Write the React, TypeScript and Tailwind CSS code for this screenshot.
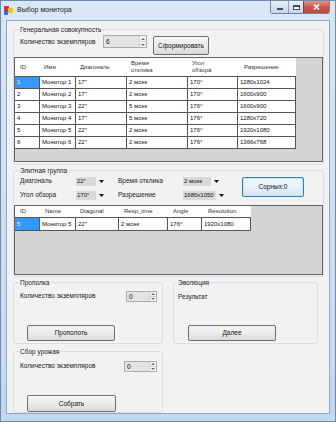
import type { ReactNode } from 'react'

type Col = { h: ReactNode; w: string; pad?: string }

const bigCols: Col[] = [
  { h: 'ID', w: 'w-[25px]', pad: 'pl-[5px]' },
  { h: 'Имя', w: 'w-[36px]' },
  { h: 'Диагональ', w: 'w-[51px]' },
  { h: <>Время<br />отклика</>, w: 'w-[61px]' },
  { h: <>Угол<br />обзора</>, w: 'w-[50px]' },
  { h: 'Разрешение', w: 'w-[58px]', pad: 'pl-[6px]' },
]

const bigRows = [
  ['1', 'Монитор 1', '17"', '2 мсек', '170°', '1280x1024'],
  ['2', 'Монитор 2', '17"', '2 мсек', '170°', '1600x900'],
  ['3', 'Монитор 3', '22"', '5 мсек', '176°', '1600x900'],
  ['4', 'Монитор 4', '17"', '5 мсек', '176°', '1280x720'],
  ['5', 'Монитор 5', '22"', '2 мсек', '176°', '1920x1080'],
  ['6', 'Монитор 6', '22"', '2 мсек', '176°', '1366x768'],
]

const eliteCols: Col[] = [
  { h: 'ID', w: 'w-[25px]', pad: 'pl-[5px]' },
  { h: 'Name', w: 'w-[36px]', pad: 'pl-[5px]' },
  { h: 'Diagonal', w: 'w-[43px]' },
  { h: 'Resp_time', w: 'w-[49px]', pad: 'pl-[5px]' },
  { h: 'Angle', w: 'w-[34px]', pad: 'pl-[5px]' },
  { h: 'Resolution', w: 'w-[49px]', pad: 'pl-[6px]' },
]

const eliteRows = [['5', 'Монитор 5', '22"', '2 мсек', '176°', '1920x1080']]

function Grid({ cols, rows, head, row, box }: { cols: Col[]; rows: string[][]; head: string; row: string; box: string }) {
  return (
    <div className={`w-[309px] overflow-hidden border border-[#646464] bg-[#d4d4d4] ${box}`}>
      <div className="flex">
        {cols.map((c, i) => (
          <div key={i} className={`${c.w} ${head} flex items-center border-b border-[#555] bg-white ${c.pad ?? 'pl-[4px]'} text-[6px] leading-[7px] text-[#333]`}>
            <span>{c.h}</span>
          </div>
        ))}
      </div>
      {rows.map((r, ri) => (
        <div key={ri} className="flex">
          {r.map((v, ci) => (
            <div
              key={ci}
              className={`${cols[ci].w} ${row} flex items-center border-r border-b border-[#555] pl-[2px] text-[6px] ${
                ri === 0 && ci === 0 ? 'bg-[#3399ff] text-white' : 'bg-white text-[#111]'
              }`}
            >
              {v}
            </div>
          ))}
        </div>
      ))}
    </div>
  )
}

function Group({ title, cls, lg = 'ml-[5px]', children }: { title: string; cls: string; lg?: string; children: ReactNode }) {
  return (
    <fieldset className={`rounded-[3px] border border-[#d5dfe5] ${cls}`}>
      <legend className={`${lg} px-[1px] text-[6.5px] leading-[9px] text-[#1a1a1a]`}>{title}</legend>
      {children}
    </fieldset>
  )
}

function Spin({ v, w, h }: { v: string; w: string; h: string }) {
  return (
    <div className={`flex ${w} ${h} border border-[#abadb3] bg-white`}>
      <div className="flex flex-1 items-center bg-[#e3e3e3] pl-[2px] text-[6.5px] text-[#111]">{v}</div>
      <div className="flex w-[7px] flex-col border-l border-[#d0d0d0] bg-[#f5f5f5]">
        <div className="flex flex-1 items-center justify-center border-b border-[#d0d0d0]">
          <svg width="4" height="2"><path d="M0 2L2 0L4 2Z" fill="#6a6a6a" /></svg>
        </div>
        <div className="flex flex-1 items-center justify-center">
          <svg width="4" height="2"><path d="M0 0L2 2L4 0Z" fill="#6a6a6a" /></svg>
        </div>
      </div>
    </div>
  )
}

function Combo({ v, w, box }: { v: string; w: string; box: string }) {
  return (
    <div className={`flex h-[10px] items-center ${box}`}>
      <span className={`${w} h-[9px] bg-[#d9d9d9] pl-[1px] text-[6px] leading-[9px] text-[#111]`}>{v}</span>
      <svg className="ml-[3px]" width="5" height="3"><path d="M0 0H5L2.5 3Z" fill="#111" /></svg>
    </div>
  )
}

function Btn({ children, cls }: { children: ReactNode; cls: string }) {
  return (
    <div className={`flex items-center justify-center rounded-[2px] border border-[#707070] bg-linear-to-b from-[#f5f5f5] via-[#ececec] to-[#d9d9d9] text-[6.5px] text-[#111] ${cls}`}>
      {children}
    </div>
  )
}

export default function App() {
  return (
    <div className="flex h-[422px] w-[336px] flex-col overflow-hidden border border-[#6f8cb0] bg-linear-to-b from-[#d9e7f6] to-[#c3d7ee] font-['Liberation_Sans',Arial,sans-serif]">
      {/* title bar */}
      <div className="flex h-[19px] shrink-0 items-start">
        <svg className="ml-[3px] mt-[4px]" width="9" height="10" viewBox="0 0 9 10">
          <rect x="0" y="1" width="5" height="5" fill="#d8322b" />
          <rect x="4" y="3" width="5" height="5" fill="#f3c316" />
          <rect x="0" y="6" width="4" height="4" fill="#3a6fd0" />
        </svg>
        <span className="ml-[4px] mt-[4px] text-[7px] leading-[9px] text-[#1e1e1e]">Выбор монитора</span>
        <div className="ml-auto mr-[5px] flex h-[13px] overflow-hidden rounded-b-[3px] border border-t-0 border-[#6d86a8]">
          <div className="flex w-[17px] items-end justify-center bg-linear-to-b from-[#e9f1fa] to-[#c4d6ec] pb-[3px]">
            <div className="h-[2px] w-[6px] border border-[#3d4c60] bg-white" />
          </div>
          <div className="flex w-[15px] items-center justify-center border-l border-[#8aa0bd] bg-linear-to-b from-[#e9f1fa] to-[#c4d6ec]">
            <div className="h-[5px] w-[7px] border border-t-2 border-[#3d4c60] bg-white" />
          </div>
          <div className="flex w-[26px] items-center justify-center border-l border-[#8a3a33] bg-linear-to-b from-[#e0948a] via-[#d0574c] to-[#c3463a]">
            <svg width="7" height="6" viewBox="0 0 7 6">
              <path d="M1 0.5L6 5.5M6 0.5L1 5.5" stroke="#fff" strokeWidth="1.6" />
            </svg>
          </div>
        </div>
      </div>

      {/* client area */}
      <div className="mx-[5px] h-[394px] shrink-0 overflow-hidden border border-[#91a7c3] bg-[#f2f2f2]">
        <Group title="Генеральная совокупность" cls="ml-[6px] mt-[4px] h-[140px] w-[311px]">
          <div className="mt-[1px] flex items-start">
            <span className="ml-[6px] mt-[2px] w-[83px] text-[6.5px] leading-[9px] text-[#1a1a1a]">Количество экземпляров</span>
            <Spin v="6" w="w-[44px]" h="h-[13px]" />
            <Btn cls="ml-[6px] mt-[1px] h-[19px] w-[56px]">Сформировать</Btn>
          </div>
          <Grid cols={bigCols} rows={bigRows} head="h-[19px]" row="h-[12px]" box="mt-[2px] h-[105px]" />
        </Group>

        <Group title="Элитная группа" cls="ml-[6px] mt-[1px] h-[111px] w-[311px]">
          <div className="mt-[1px] flex items-start">
            <div className="flex flex-col">
              <div className="flex h-[10px] items-center text-[6.5px] text-[#1a1a1a]">
                <span className="ml-[6px] w-[56px]">Диагональ</span>
                <Combo v={'22"'} w="w-[20px]" box="w-[30px]" />
                <span className="ml-[12px] w-[65px]">Время отклика</span>
                <Combo v="2 мсек" w="w-[28px]" box="w-[43px]" />
              </div>
              <div className="mt-[4px] flex h-[10px] items-center text-[6.5px] text-[#1a1a1a]">
                <span className="ml-[6px] w-[56px]">Угол обзора</span>
                <Combo v="170°" w="w-[20px]" box="w-[30px]" />
                <span className="ml-[12px] w-[65px]">Разрешение</span>
                <Combo v="1680x1050" w="w-[33px]" box="w-[43px]" />
              </div>
            </div>
            <div className="ml-[16px] mt-[1px] flex h-[20px] w-[62px] items-center justify-center rounded-[2px] border border-[#3c7fb1] bg-linear-to-b from-[#f3f9fd] via-[#e6f1fa] to-[#d3e6f5] text-[6.5px] text-[#111] shadow-[inset_0_0_0_1px_#c8e6fb]">
              Сорных:0
            </div>
          </div>
          <Grid cols={eliteCols} rows={eliteRows} head="h-[12px]" row="h-[13px]" box="mt-[5px] h-[70px]" />
        </Group>

        <div className="mt-[1px] flex items-start">
          <Group title="Прополка" cls="ml-[6px] h-[66px] w-[150px]">
            <div className="mt-[4px] flex items-start">
              <span className="ml-[6px] w-[106px] text-[6.5px] leading-[9px] text-[#1a1a1a]">Количество экземпляров</span>
              <Spin v="0" w="w-[31px]" h="h-[11px]" />
            </div>
            <Btn cls="ml-[13px] mt-[23px] h-[16px] w-[88px]">Прополоть</Btn>
          </Group>
          <Group title="Эволюция" lg="ml-[3px]" cls="ml-[10px] h-[66px] w-[145px]">
            <div className="ml-[4px] mt-[5px] text-[6.5px] leading-[9px] text-[#1a1a1a]">Результат</div>
            <Btn cls="ml-[14px] mt-[24px] h-[16px] w-[88px]">Далее</Btn>
          </Group>
        </div>

        <Group title="Сбор урожая" cls="ml-[6px] mt-[3px] h-[66px] w-[150px]">
          <div className="mt-[5px] flex items-start">
            <span className="ml-[6px] w-[104px] text-[6.5px] leading-[9px] text-[#1a1a1a]">Количество экземпляров</span>
            <Spin v="0" w="w-[33px]" h="h-[11px]" />
          </div>
          <Btn cls="ml-[13px] mt-[23px] h-[17px] w-[89px]">Собрать</Btn>
        </Group>
      </div>
    </div>
  )
}
